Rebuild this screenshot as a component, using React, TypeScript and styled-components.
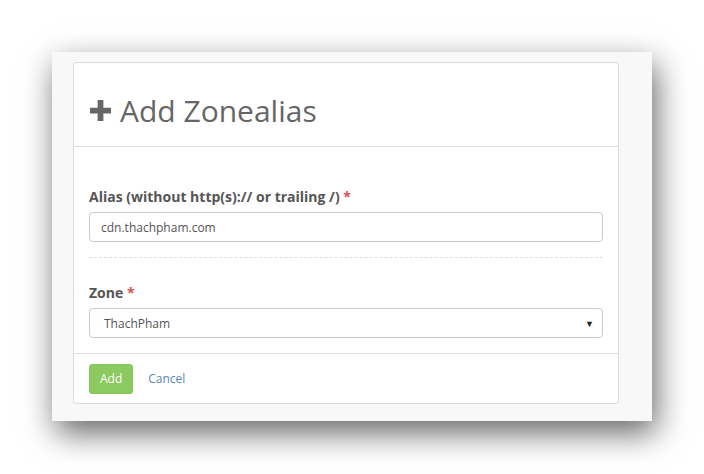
import styled, { createGlobalStyle } from "styled-components";

const GlobalStyle = createGlobalStyle`
  html, body {
    margin: 0;
    padding: 0;
    background: #ffffff;
  }
  body {
    font-family: "Open Sans", "Liberation Sans", sans-serif;
  }
`;

const App = () => {
  return (
    <>
      <GlobalStyle />
      <Page>
        <Paper>
          <Card>
            <Header>
              <PlusIcon viewBox="0 0 24 24">
                <path d="M9 1h6v8h8v6h-8v8H9v-8H1V9h8z" fill="#666" />
              </PlusIcon>
              <Title>Add Zonealias</Title>
            </Header>
            <Body>
              <Field>
                <Label>
                  Alias (without http(s):// or trailing /) <Required>*</Required>
                </Label>
                <Input defaultValue="cdn.thachpham.com" />
              </Field>
              <Divider />
              <Field>
                <Label>
                  Zone <Required>*</Required>
                </Label>
                <SelectBox>
                  <span>ThachPham</span>
                  <Caret>▼</Caret>
                </SelectBox>
              </Field>
            </Body>
            <Footer>
              <AddButton>Add</AddButton>
              <CancelLink>Cancel</CancelLink>
            </Footer>
          </Card>
        </Paper>
      </Page>
    </>
  );
};
export default App;

const Page = styled.div`
  width: 704px;
  height: 474px;
  padding: 52px 0 0 52px;
  box-sizing: border-box;
`;
const Paper = styled.div`
  width: 600px;
  height: 369px;
  box-sizing: border-box;
  background: #f8f8f8;
  padding: 10px 33px 0 21px;
  box-shadow: 4px 12px 30px rgba(0, 0, 0, 0.6);
`;
const Card = styled.div`
  background: #ffffff;
  border: 1px solid #dcdcdc;
  border-radius: 3px;
  height: 342px;
  box-sizing: border-box;
  display: flex;
  flex-direction: column;
`;
const Header = styled.div`
  height: 84px;
  box-sizing: border-box;
  border-bottom: 1px solid #dddddd;
  display: flex;
  align-items: center;
  padding: 12px 15px 0;
  gap: 8px;
`;
const PlusIcon = styled.svg`
  width: 23px;
  height: 23px;
  flex-shrink: 0;
`;
const Title = styled.h1`
  margin: 0;
  font-size: 30px;
  font-weight: 400;
  color: #666666;
  line-height: 1;
`;
const Body = styled.div`
  padding: 40px 15px 0;
  flex-grow: 1;
`;
const Field = styled.div`
  display: flex;
  flex-direction: column;
`;
const Label = styled.label`
  font-size: 14px;
  font-weight: 700;
  color: #555555;
  margin-bottom: 5px;
  line-height: 20px;
`;
const Required = styled.span`
  color: #d9534f;
`;
const Input = styled.input`
  height: 30px;
  box-sizing: border-box;
  border: 1px solid #cccccc;
  border-radius: 4px;
  padding: 0 11px;
  font-family: "Open Sans", "Liberation Sans", sans-serif;
  font-size: 12px;
  color: #555555;
  outline: none;
`;
const Divider = styled.div`
  border-top: 1px dashed #dddddd;
  margin: 15px 0 25px;
`;
const SelectBox = styled.div`
  height: 30px;
  box-sizing: border-box;
  border: 1px solid #cccccc;
  border-radius: 4px;
  padding: 0 8px 0 14px;
  display: flex;
  align-items: center;
  justify-content: space-between;
  font-size: 12px;
  color: #555555;
`;
const Caret = styled.span`
  font-size: 9px;
  color: #222;
`;
const Footer = styled.div`
  border-top: 1px solid #dddddd;
  height: 50px;
  box-sizing: border-box;
  display: flex;
  align-items: center;
  padding: 0 15px;
  gap: 15px;
`;
const AddButton = styled.button`
  height: 30px;
  padding: 0 10px;
  border: 1px solid #86c35a;
  border-radius: 3px;
  background: #8cc95e;
  color: #ffffff;
  font-family: "Open Sans", "Liberation Sans", sans-serif;
  font-size: 12px;
`;
const CancelLink = styled.a`
  font-size: 12px;
  color: #5a88b3;
  cursor: pointer;
`;
